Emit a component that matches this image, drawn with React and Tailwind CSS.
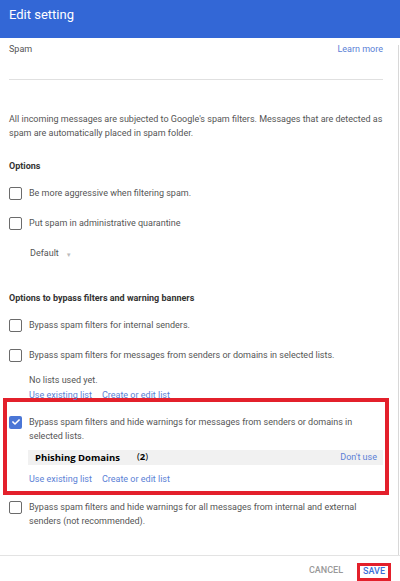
import { FaCheck } from "react-icons/fa";

const Box = ({ checked }) => (
	<div className="h-[14px] flex items-center shrink-0">
		<div
			className={`w-[13px] h-[13px] rounded-[2px] flex items-center justify-center ${
				checked ? "bg-[#4a76d6]" : "border-[1.5px] border-[#6b6b6b]"
			}`}
		>
			{checked && <FaCheck className="text-white text-[8px]" />}
		</div>
	</div>
);

const Option = ({ checked, children, className = "" }) => (
	<div className={`flex items-start gap-[7px] ${className}`}>
		<Box checked={checked} />
		<div className="text-[9px] leading-[14px] text-[#555]">{children}</div>
	</div>
);

const Links = ({ className = "" }) => (
	<div className={`flex gap-[10px] h-[14px] items-center text-[9px] text-[#5b7fd6] ${className}`}>
		<span>Use existing list</span>
		<span>Create or edit list</span>
	</div>
);

export default function App() {
	return (
		<div className="w-[400px] h-[581px] bg-white overflow-hidden flex flex-col font-['Roboto',sans-serif]">
			<div className="h-[38px] shrink-0 bg-[#3367d6] px-[9px] flex items-center">
				<span className="text-white text-[13px] -mt-[8px]">Edit setting</span>
			</div>
			<div className="flex-1 flex min-h-0">
				<div className="flex-1 pl-[9px] pr-[15px]">
					<div className="flex justify-between h-[14px] items-center text-[9px] mt-[5px]">
						<span className="text-[#555]">Spam</span>
						<span className="text-[#5b7fd6]">Learn more</span>
					</div>
					<div className="border-b border-[#e0e0e0] mt-[22px]" />
					<p className="mt-[32px] text-[9px] leading-[14px] text-[#555]">
						All incoming messages are subjected to Google's spam filters. Messages that are detected as spam are automatically placed in spam folder.
					</p>
					<div className="mt-[20px] h-[14px] flex items-center text-[9px] font-bold text-[#333]">Options</div>
					<Option className="mt-[12px]">Be more aggressive when filtering spam.</Option>
					<Option className="mt-[16px]">Put spam in administrative quarantine</Option>
					<div className="mt-[17px] ml-[21px] h-[14px] flex items-center gap-[7px] text-[9px] text-[#555]">
						<span>Default</span>
						<span className="text-[#bbb] text-[6px]">▼</span>
					</div>
					<div className="mt-[31px] h-[14px] flex items-center text-[9px] font-bold text-[#333]">
						Options to bypass filters and warning banners
					</div>
					<Option className="mt-[12px]">Bypass spam filters for internal senders.</Option>
					<Option className="mt-[16px]">
						Bypass spam filters for messages from senders or domains in selected lists.
					</Option>
					<div className="mt-[12px] ml-[20px] h-[14px] flex items-center text-[9px] text-[#555]">No lists used yet.</div>
					<Links className="ml-[20px] mt-[1px]" />
					<div className="-ml-[6px] -mr-[6px] mt-[-5px] border-[4px] border-[#e3202b] pl-[2px] pr-[2px] pt-[13px] pb-[4px]">
						<Option checked>
							Bypass spam filters and hide warnings for messages from senders or domains in selected lists.
						</Option>
						<div className="ml-[19px] mt-[7px] bg-[#f1f1f1] h-[15px] flex items-center pl-[7px] pr-[6px] text-[9px] overflow-hidden">
							<span className="w-[102px] font-bold text-black text-[9.5px] font-['Open_Sans',sans-serif] mt-[2px]">Phishing Domains</span>
							<span className="text-black text-[9.5px] font-['Open_Sans',sans-serif]">
								(<b>2</b>)
							</span>
							<span className="ml-auto text-[#5b7fd6]">Don't use</span>
						</div>
						<Links className="ml-[20px] mt-[8px]" />
					</div>
					<Option className="mt-[5px]">
						Bypass spam filters and hide warnings for all messages from internal and external senders (not recommended).
					</Option>
				</div>
				<div className="w-[1px] bg-[#d8d8d8] mt-[7px] mr-[1px]" />
			</div>
			<div className="h-[26px] shrink-0 border-t border-[#e3e3e3] flex items-end justify-end gap-[14px] pr-[9px] text-[9px] font-medium">
				<span className="text-[#999] mb-[4px]">CANCEL</span>
				<span className="text-[#3b6fd8] border-[3px] border-[#e3202b] h-[18px] w-[34px] flex items-center justify-center">SAVE</span>
			</div>
		</div>
	);
}
